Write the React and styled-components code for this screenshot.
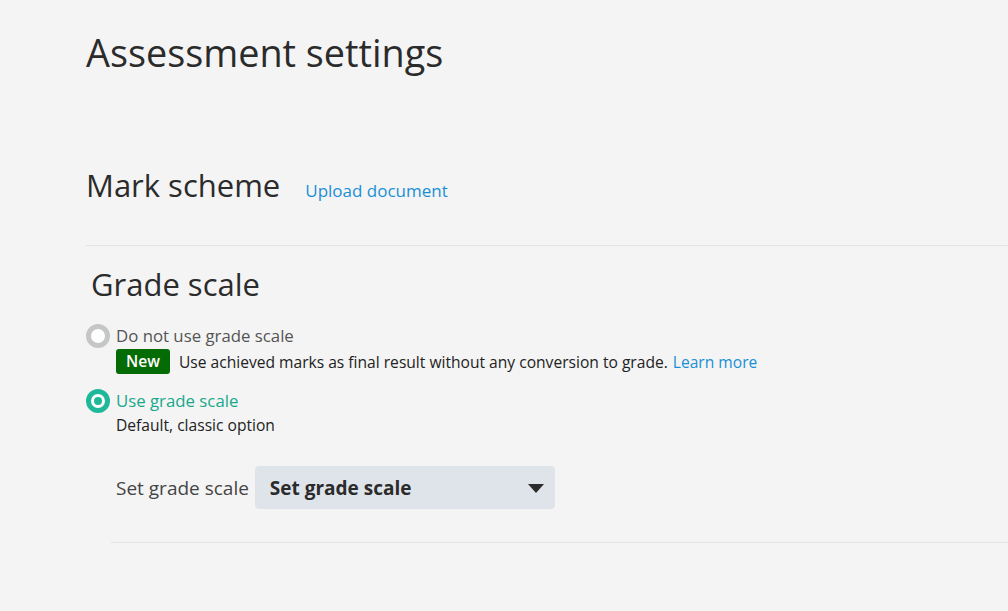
import styled, { createGlobalStyle } from "styled-components";

const GlobalStyle = createGlobalStyle`
  html, body {
    margin: 0;
    padding: 0;
    background: #f4f4f4;
    font-family: "Open Sans", "Noto Sans", sans-serif;
    color: #2b2b2b;
  }
`;

const Page = styled.main`
  padding: 24px 0 0 86px;
  min-height: 611px;
  box-sizing: border-box;
  overflow: hidden;
`;

const Title = styled.h1`
  margin: 0;
  font-size: 37.8px;
  font-weight: 400;
  line-height: 58px;
  color: #2b2b2b;
`;

const Section = styled.section`
  padding: ${(p) => p.$pad || "0"};
  border-bottom: ${(p) => (p.$divider ? "1px solid #e4e4e4" : "none")};
`;

const SectionHead = styled.div`
  display: flex;
  align-items: baseline;
  gap: 25px;
`;

const Heading = styled.h2`
  margin: 0;
  font-size: 31px;
  font-weight: 400;
  line-height: 44px;
  color: #2b2b2b;
  padding-left: ${(p) => p.$indent || 0}px;
`;

const Link = styled.a`
  color: #1a8fd6;
  font-size: 17px;
  text-decoration: none;
  cursor: pointer;
`;

const Options = styled.div`
  display: flex;
  flex-direction: column;
  gap: 16px;
  margin-top: 19px;
`;

const Option = styled.label`
  display: grid;
  grid-template-columns: 30px 1fr;
  row-gap: 0;
  cursor: pointer;
`;

const Radio = styled.span`
  width: 24px;
  height: 24px;
  box-sizing: border-box;
  border-radius: 50%;
  border: 5px solid ${(p) => (p.$checked ? "#1fb89a" : "#c4c6c8")};
  background: #fff;
  display: flex;
  align-items: center;
  justify-content: center;
  margin-top: -1px;

  &::after {
    content: "";
    display: ${(p) => (p.$checked ? "block" : "none")};
    width: 8px;
    height: 8px;
    border-radius: 50%;
    background: #1fb89a;
  }
`;

const OptionLabel = styled.span`
  font-size: 16.8px;
  line-height: 22px;
  color: ${(p) => (p.$checked ? "#17a98b" : "#555")};
`;

const Hint = styled.div`
  grid-column: 2;
  display: flex;
  align-items: center;
  gap: 9px;
  margin-top: ${(p) => (p.$tight ? 0 : 1)}px;
  font-size: 15.6px;
  line-height: 24px;
  color: #222;
`;

const Badge = styled.span`
  background: #056b05;
  color: #fff;
  font-weight: 600;
  font-size: 15.6px;
  line-height: 25px;
  padding: 0 10px;
  border-radius: 3px;
`;

const InlineLink = styled(Link)`
  font-size: 15.6px;
  margin-left: -4px;
`;

const Field = styled.div`
  display: flex;
  align-items: center;
  gap: 6px;
  padding: 29px 0 33px 5px;
  margin-left: 25px;
  border-bottom: 1px solid #e4e4e4;
`;

const FieldLabel = styled.span`
  font-size: 19px;
  color: #444;
`;

const Select = styled.button`
  width: 300px;
  height: 43px;
  border: none;
  border-radius: 4px;
  background: #dfe3ea;
  display: flex;
  align-items: center;
  justify-content: space-between;
  padding: 0 11px 0 15px;
  font-family: inherit;
  font-size: 19px;
  font-weight: 700;
  color: #2b2b2b;
  cursor: pointer;
`;

const Caret = () => (
  <svg width="16" height="10" viewBox="0 0 16 10">
    <path d="M0 1 L16 1 L8 10 Z" fill="#2b2b2b" />
  </svg>
);

export default function App() {
  return (
    <>
      <GlobalStyle />
      <Page>
        <Title>Assessment settings</Title>

        <Section $pad="81px 0 38px" $divider>
          <SectionHead>
            <Heading>Mark scheme</Heading>
            <Link>Upload document</Link>
          </SectionHead>
        </Section>

        <Section $pad="16px 0 0">
          <Heading $indent={5}>Grade scale</Heading>
          <Options>
            <Option>
              <Radio />
              <OptionLabel>Do not use grade scale</OptionLabel>
              <Hint>
                <Badge>New</Badge>
                Use achieved marks as final result without any conversion to grade.
                <InlineLink>Learn more</InlineLink>
              </Hint>
            </Option>
            <Option>
              <Radio $checked />
              <OptionLabel $checked>Use grade scale</OptionLabel>
              <Hint $tight>Default, classic option</Hint>
            </Option>
          </Options>
          <Field>
            <FieldLabel>Set grade scale</FieldLabel>
            <Select>
              Set grade scale
              <Caret />
            </Select>
          </Field>
        </Section>
      </Page>
    </>
  );
}
